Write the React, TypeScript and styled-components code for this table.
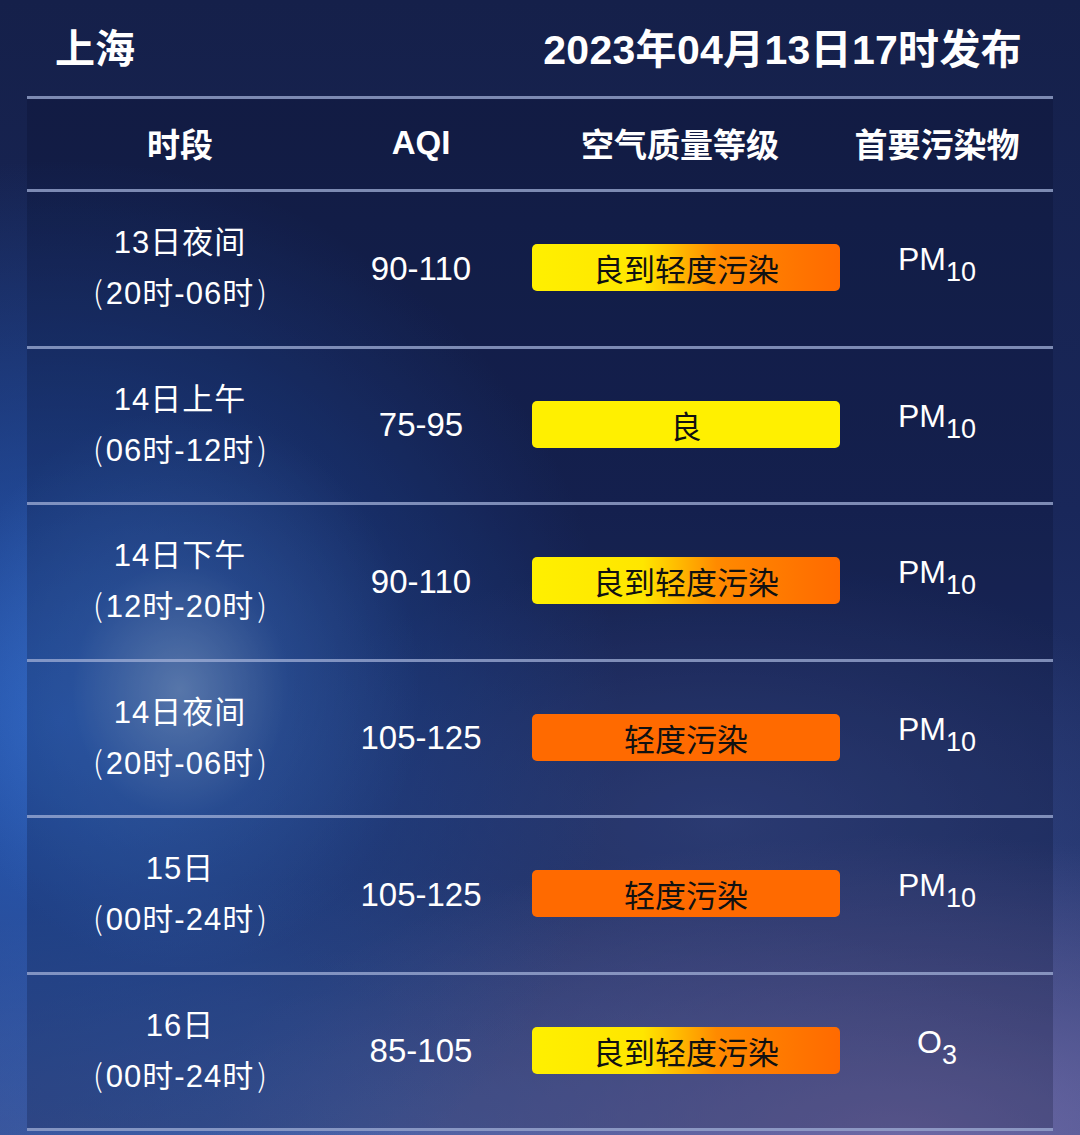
import React from 'react'
import styled, { createGlobalStyle } from 'styled-components'

const GlobalStyle = createGlobalStyle`
  html, body {
    margin: 0;
    padding: 0;
    background: #16214a;
  }
  body {
    font-family: "Liberation Sans", "Noto Sans CJK SC", sans-serif;
    color: #fff;
  }
`

type Level = 'good' | 'mixed' | 'light'

interface RowData {
  day: string
  span: string
  aqi: string
  level: Level
  label: string
  pollutant: 'pm10' | 'o3'
}

const rows: RowData[] = [
  { day: '13日夜间', span: '20时-06时', aqi: '90-110', level: 'mixed', label: '良到轻度污染', pollutant: 'pm10' },
  { day: '14日上午', span: '06时-12时', aqi: '75-95', level: 'good', label: '良', pollutant: 'pm10' },
  { day: '14日下午', span: '12时-20时', aqi: '90-110', level: 'mixed', label: '良到轻度污染', pollutant: 'pm10' },
  { day: '14日夜间', span: '20时-06时', aqi: '105-125', level: 'light', label: '轻度污染', pollutant: 'pm10' },
  { day: '15日', span: '00时-24时', aqi: '105-125', level: 'light', label: '轻度污染', pollutant: 'pm10' },
  { day: '16日', span: '00时-24时', aqi: '85-105', level: 'mixed', label: '良到轻度污染', pollutant: 'o3' },
]

const Page = styled.div`
  width: 1080px;
  height: 1135px;
  overflow: hidden;
  box-sizing: border-box;
  padding: 0 27px;
  background:
    radial-gradient(ellipse 240px 280px at 180px 690px, rgba(150, 185, 230, 0.65), rgba(80, 130, 210, 0.3) 45%, rgba(40, 90, 180, 0) 100%),
    radial-gradient(ellipse 560px 560px at 60px 720px, rgba(40, 100, 200, 0.85), rgba(40, 100, 200, 0) 100%),
    radial-gradient(ellipse 700px 300px at 900px 1135px, rgba(120, 110, 170, 0.8), rgba(120, 110, 170, 0) 100%),
    radial-gradient(ellipse 500px 260px at 720px 820px, rgba(70, 90, 160, 0.55), rgba(70, 90, 160, 0) 100%),
    radial-gradient(ellipse 700px 260px at 400px 1135px, rgba(70, 100, 170, 0.8), rgba(70, 100, 170, 0) 100%),
    linear-gradient(180deg, #15204a 0%, #19275a 45%, #23346c 75%, #3a4a86 100%);
`

const TitleBar = styled.div`
  height: 96px;
  display: flex;
  align-items: center;
  justify-content: space-between;
  padding: 0 31px 0 28px;
  box-sizing: border-box;
  font-weight: 700;
`

const City = styled.div`
  font-size: 40px;
  font-family: "Noto Sans CJK SC", sans-serif;
  font-weight: 700;
  margin-top: -4px;
`

const Stamp = styled.div`
  font-size: 41px;
  font-weight: 700;
  letter-spacing: 0.3px;
  margin-top: -4px;
`

const Table = styled.div`
  background: rgba(5, 10, 35, 0.22);
  border-bottom: 3px solid rgba(160, 175, 215, 0.75);
`

const Row = styled.div<{ $head?: boolean }>`
  display: grid;
  grid-template-columns: 306px 176px 354px 148px;
  padding-right: 42px;
  height: ${p => (p.$head ? '93px' : '156.5px')};
  box-sizing: border-box;
  border-top: 3px solid rgba(160, 175, 215, 0.75);
  align-items: center;
`

const HeadCell = styled.div<{ $shift?: number }>`
  display: flex;
  justify-content: center;
  white-space: nowrap;
  font-size: 33px;
  font-weight: 700;
  padding-bottom: 2px;
  margin-left: ${p => (p.$shift ? `${p.$shift}px` : '0')};
`

const Cell = styled.div`
  text-align: center;
  white-space: nowrap;
  font-size: 33px;
  line-height: 48px;
`

const Period = styled(Cell)`
  font-size: 31px;
  letter-spacing: 1px;
`

const Paren = styled.span`
  font-family: "Noto Sans CJK SC", sans-serif;
  font-weight: 300;
  letter-spacing: 0;
  margin: 0 3px;
`

const badgeBg: Record<Level, string> = {
  good: '#fff000',
  light: '#ff6a00',
  mixed: 'linear-gradient(90deg, #fff000 0%, #ffe600 36%, #ff8a00 60%, #ff6a00 100%)',
}

const BadgeWrap = styled.div`
  display: flex;
  justify-content: center;
  padding-bottom: 2px;
`

const Badge = styled.div<{ $level: Level }>`
  width: 308px;
  height: 47px;
  border-radius: 5px;
  background: ${p => badgeBg[p.$level]};
  color: #111;
  font-size: 31px;
  line-height: 47px;
  text-align: center;
  font-family: "Noto Sans CJK SC", sans-serif;
`

const Pollutant = styled.div`
  text-align: center;
  font-size: 32px;
  padding-bottom: 18px;
`

const Sub = styled.sub`
  font-size: 27px;
  vertical-align: -11px;
  line-height: 0;
`

const App: React.FC = () => {
  return (
    <>
      <GlobalStyle />
      <Page>
        <TitleBar>
          <City>上海</City>
          <Stamp>2023年04月13日17时发布</Stamp>
        </TitleBar>
        <Table>
          <Row $head>
            <HeadCell>时段</HeadCell>
            <HeadCell>AQI</HeadCell>
            <HeadCell $shift={-12}>空气质量等级</HeadCell>
            <HeadCell>首要污染物</HeadCell>
          </Row>
          {rows.map((r, i) => (
            <Row key={i}>
              <Period>
                {r.day}
                <br />
                <Paren>(</Paren>
                {r.span}
                <Paren>)</Paren>
              </Period>
              <Cell>{r.aqi}</Cell>
              <BadgeWrap>
                <Badge $level={r.level}>{r.label}</Badge>
              </BadgeWrap>
              <Pollutant>
                {r.pollutant === 'pm10' ? 'PM' : 'O'}
                <Sub>{r.pollutant === 'pm10' ? '10' : '3'}</Sub>
              </Pollutant>
            </Row>
          ))}
        </Table>
      </Page>
    </>
  )
}

export default App
